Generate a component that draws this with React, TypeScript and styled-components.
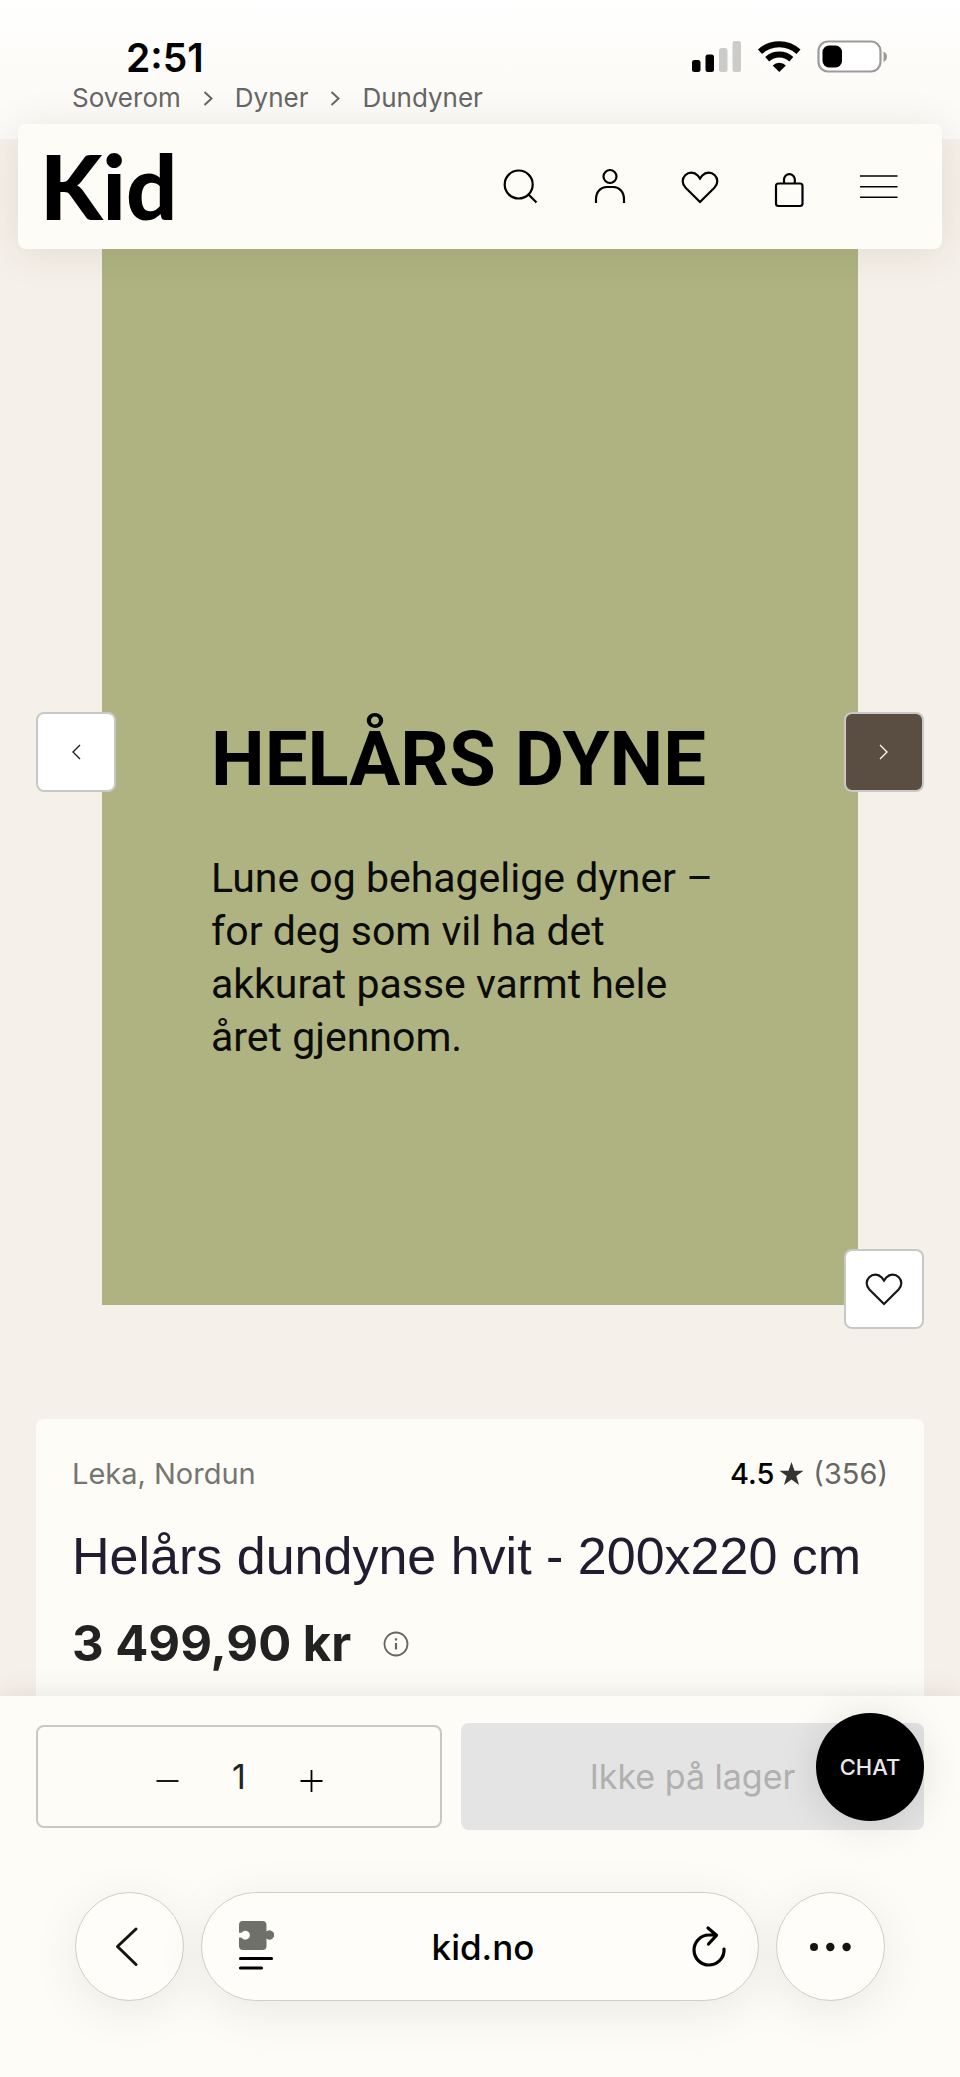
import React, { useState } from "react";
import styled, { createGlobalStyle } from "styled-components";

const GlobalStyle = createGlobalStyle`
  *, *::before, *::after { box-sizing: border-box; }
  body {
    margin: 0;
    background: #fdfcf7;
    font-family: Inter, "Liberation Sans", sans-serif;
    color: #222;
  }
  button, input { font: inherit; color: inherit; }
  h1, h2, p { margin: 0; }
  svg { display: block; }
`;

const Page = styled.div`
  background: linear-gradient(#ffffff 0, #fdfcf9 60px, #fbfaf7 139px, #f5f0e9 139px);
`;

const StatusBar = styled.div`
  display: flex;
  justify-content: space-between;
  align-items: center;
  padding: 36px 72px 0 126px;
`;

const Time = styled.span`
  font-size: 39px;
  font-weight: 600;
  line-height: 44px;
  color: #000;
`;

const Breadcrumbs = styled.nav`
  display: flex;
  align-items: center;
  gap: 21px;
  padding: 2px 72px 10px;
  line-height: 32px;
  color: #666;
`;

const Crumb = styled.a`
  font-size: 26px;
  color: inherit;
  text-decoration: none;
`;

const Header = styled.header`
  position: relative;
  z-index: 2;
  display: flex;
  justify-content: space-between;
  align-items: center;
  height: 125px;
  margin: 0 18px;
  padding: 0 38px 0 22px;
  border-radius: 8px;
  background: #fdfcf7;
  box-shadow: 0 4px 40px rgba(60, 45, 25, 0.1);
`;

const Logo = styled.a`
  padding-bottom: 4px;
  font-family: Lato, sans-serif;
  font-size: 90px;
  font-weight: 900;
  line-height: 112px;
  color: #000;
  text-decoration: none;
`;

const HeaderActions = styled.div`
  display: flex;
  gap: 42px;
`;

const IconButton = styled.button`
  padding: 0;
  border: 0;
  background: none;
  color: #000;
`;

const Gallery = styled.section`
  position: relative;
  padding: 0 102px;
`;

const Slide = styled.div`
  aspect-ratio: 63 / 88;
  padding: 470px 0 0 109px;
  background: #afb381;
  color: #0b0b08;
  font-family: Roboto, sans-serif;
  white-space: nowrap;
`;

const SlideTitle = styled.h2`
  font-size: 76px;
  font-weight: 700;
  line-height: 80px;
  color: #000;
`;

const SlideText = styled.p`
  margin-top: 53px;
  font-size: 41px;
  line-height: 53px;
`;

const SquareButton = styled.button<{ $side: "left" | "right"; $dark?: boolean; $low?: boolean }>`
  position: absolute;
  ${(p) => p.$side}: 36px;
  ${(p) => (p.$low ? "bottom: -24px" : "top: 463px")};
  display: grid;
  place-items: center;
  width: 80px;
  height: 80px;
  padding: 0;
  border: 2px solid #c9c8c5;
  border-radius: 8px;
  background: ${(p) => (p.$dark ? "#5a4e43" : "#fff")};
  color: ${(p) => (p.$dark ? "#fff" : "#16161a")};
`;

const ProductCard = styled.section`
  margin: 114px 36px 0;
  padding: 35px 36px 20px;
  border-radius: 8px 8px 0 0;
  background: #fdfcf7;
`;

const MetaRow = styled.div`
  display: flex;
  justify-content: space-between;
  align-items: center;
  line-height: 40px;
`;

const Brand = styled.a`
  font-size: 29px;
  color: #757571;
  text-decoration: none;
`;

const Rating = styled.div`
  display: flex;
  align-items: center;
  gap: 5px;
  font-size: 29px;
  font-weight: 500;
  color: #000;
`;

const ReviewCount = styled.a`
  padding-left: 4px;
  font-weight: 400;
  color: #666;
  text-decoration: none;
`;

const ProductTitle = styled.h1`
  margin-top: 30px;
  font-family: "Liberation Sans", Arial, sans-serif;
  font-size: 52px;
  font-weight: 400;
  line-height: 64px;
  color: #211d30;
`;

const PriceRow = styled.div`
  display: flex;
  align-items: center;
  gap: 32px;
  margin-top: 24px;
`;

const Price = styled.span`
  font-size: 49px;
  font-weight: 700;
  line-height: 64px;
`;

const BottomBar = styled.div`
  position: relative;
  background: #fdfcf7;
  box-shadow: 0 -4px 24px rgba(60, 50, 40, 0.1);
`;

const BuyRow = styled.div`
  display: grid;
  grid-template-columns: 406fr 463fr;
  gap: 19px;
  align-items: center;
  padding: 27px 36px 62px;
`;

const Quantity = styled.div`
  display: flex;
  justify-content: center;
  align-items: center;
  height: 103px;
  border: 2px solid #c9c8c5;
  border-radius: 8px;
`;

const QuantityInput = styled.input`
  width: 80px;
  padding: 0;
  border: 0;
  background: none;
  font-size: 34px;
  line-height: 40px;
  text-align: center;
`;

const BuyButton = styled.button`
  height: 107px;
  padding: 0;
  border: 0;
  border-radius: 8px;
  background: #e4e4e4;
  color: #b0b0b0;
  font-size: 34px;
`;

const ChatButton = styled.button`
  position: absolute;
  top: 17px;
  right: 36px;
  width: 108px;
  height: 108px;
  padding: 0;
  border: 0;
  border-radius: 50%;
  background: #000;
  color: #e8e8e8;
  font-size: 22px;
  font-weight: 500;
  box-shadow: 0 4px 40px rgba(0, 0, 0, 0.12);
`;

const BrowserBar = styled.div`
  display: flex;
  gap: 17px;
  padding: 0 75px 76px;
`;

const RoundButton = styled.button`
  display: grid;
  place-items: center;
  flex: none;
  width: 109px;
  height: 109px;
  padding: 0;
  border: 1px solid #cfcecb;
  border-radius: 50%;
  background: #fefdfa;
  color: #151510;
  box-shadow: 0 10px 50px rgba(0, 0, 0, 0.08);
`;

const AddressBar = styled.div`
  display: flex;
  flex: 1;
  justify-content: space-between;
  align-items: center;
  height: 109px;
  padding: 0 30px 0 36px;
  border: 1px solid #cfcecb;
  border-radius: 55px;
  background: #fefdfa;
  color: #000;
  box-shadow: 0 10px 50px rgba(0, 0, 0, 0.08);
`;

const Address = styled.span`
  flex: 1;
  text-align: center;
  font-size: 35px;
  font-weight: 500;
  line-height: 48px;
`;

const stroke = (width: number) => ({
  fill: "none",
  stroke: "currentColor",
  strokeWidth: width,
});

const CrumbArrow = () => (
  <svg width="12" height="18" viewBox="0 0 12 18" {...stroke(2)} aria-hidden>
    <path d="M2.500 3l7 6.500-7 6.500" />
  </svg>
);

const HeartIcon = () => (
  <svg width="48" height="48" viewBox="0 0 48 48" {...stroke(2.2)} aria-hidden>
    <path d="M24 39L9.6 24.8C5.8 21 5.8 15.500 9.2 12.200C12.8 8.700 18.2 8.800 21.7 12.400L24 15.600L26.3 12.400C29.8 8.800 35.2 8.700 38.8 12.200C42.2 15.500 42.2 21 38.4 24.800Z" />
  </svg>
);

const StatusIcons = () => (
  <svg width="197" height="36" viewBox="0 0 197 36" role="img" aria-label="Signal, Wi-Fi, batteri">
    <rect x="1" y="20" width="8.500" height="12" rx="2.500" />
    <rect x="14.500" y="14.500" width="8.500" height="17.500" rx="2.500" />
    <rect x="28" y="8" width="8.500" height="24" rx="2.500" fill="#cbcbc9" />
    <rect x="41.500" y="1" width="8.500" height="31" rx="2.500" fill="#cbcbc9" />
    <g fill="none" stroke="#000" strokeWidth="6">
      <path d="M69 11.700A28.500 28.500 0 0 1 107.500 11.700" />
      <path d="M76.200 19.200A18 18 0 0 1 100.300 19.200" />
    </g>
    <path d="M88.300 32L81.700 25.400A9.300 9.300 0 0 1 94.900 25.400Z" />
    <rect x="127.500" y="1.500" width="62" height="30" rx="9.500" fill="#fff" stroke="#9b9b99" strokeWidth="2.200" />
    <rect x="131.500" y="5.500" width="19.500" height="22" rx="6.500" />
    <path d="M192.500 11.500C197.200 13.500 197.200 20 192.500 22Z" fill="#9b9b99" />
  </svg>
);

export default function App() {
  const [quantity, setQuantity] = useState("1");
  const step = (by: number) => setQuantity(String(Math.max(1, Number(quantity) + by)));

  return (
    <Page>
      <GlobalStyle />
      <StatusBar>
        <Time>2:51</Time>
        <StatusIcons />
      </StatusBar>
      <Breadcrumbs aria-label="Brødsmuler">
        <Crumb href="#soverom">Soverom</Crumb>
        <CrumbArrow />
        <Crumb href="#dyner">Dyner</Crumb>
        <CrumbArrow />
        <Crumb href="#dundyner">Dundyner</Crumb>
      </Breadcrumbs>

      <Header>
        <Logo href="#hjem">Kid</Logo>
        <HeaderActions>
          <IconButton aria-label="Søk">
            <svg width="48" height="48" viewBox="0 0 48 48" {...stroke(2.2)}>
              <circle cx="22.700" cy="21.500" r="14" />
              <path d="M32.500 31.500l8 8" />
            </svg>
          </IconButton>
          <IconButton aria-label="Min side">
            <svg width="48" height="48" viewBox="0 0 48 48" {...stroke(2.2)}>
              <circle cx="24" cy="13.500" r="6.500" />
              <path d="M10 40V36.500C10 28.500 15 24 20.500 24H27.500C33 24 38 28.500 38 36.500V40" />
            </svg>
          </IconButton>
          <IconButton aria-label="Favoritter">
            <HeartIcon />
          </IconButton>
          <IconButton aria-label="Handlekurv">
            <svg width="48" height="48" viewBox="0 0 48 48" {...stroke(2.2)}>
              <rect x="10" y="20.500" width="26.500" height="22.500" rx="2.500" />
              <path d="M18 20.500V16.500A5.400 5.400 0 0 1 28.800 16.500V20.500" />
            </svg>
          </IconButton>
          <IconButton aria-label="Meny">
            <svg width="48" height="48" viewBox="0 0 48 48" {...stroke(1.6)}>
              <path d="M4 13H41.500M4 23.700H41.500M4 34.300H41.500" />
            </svg>
          </IconButton>
        </HeaderActions>
      </Header>

      <Gallery>
        <Slide>
          <SlideTitle>HELÅRS DYNE</SlideTitle>
          <SlideText>
            Lune og behagelige dyner –<br />
            for deg som vil ha det<br />
            akkurat passe varmt hele<br />
            året gjennom.
          </SlideText>
        </Slide>
        <SquareButton $side="left" aria-label="Forrige bilde">
          <svg width="10" height="16" viewBox="0 0 10 16" {...stroke(1.3)}>
            <path d="M9 1L2 8l7 7" />
          </svg>
        </SquareButton>
        <SquareButton $side="right" $dark aria-label="Neste bilde">
          <svg width="10" height="16" viewBox="0 0 10 16" {...stroke(1.3)}>
            <path d="M1 1l7 7-7 7" />
          </svg>
        </SquareButton>
        <SquareButton $side="right" $low aria-label="Legg til i favoritter">
          <HeartIcon />
        </SquareButton>
      </Gallery>

      <ProductCard>
        <MetaRow>
          <Brand href="#leka">Leka, Nordun</Brand>
          <Rating>
            <span>4.5</span>
            <svg width="25" height="24" viewBox="0 0 25 24" fill="#333" aria-hidden>
              <path d="M12.500 0L15.500 8.700H24.500L17.300 14L20 23L12.500 17.600L5 23L7.700 14L0.500 8.700H9.500Z" />
            </svg>
            <ReviewCount href="#omtaler">(356)</ReviewCount>
          </Rating>
        </MetaRow>
        <ProductTitle>Helårs dundyne hvit - 200x220 cm</ProductTitle>
        <PriceRow>
          <Price>3 499,90 kr</Price>
          <IconButton aria-label="Prisinformasjon">
            <svg width="26" height="26" viewBox="0 0 26 26" {...stroke(1.8)} color="#666">
              <circle cx="13" cy="13" r="11.500" />
              <path d="M13 12v6.500M13 7.200v2.300" strokeWidth="2.200" />
            </svg>
          </IconButton>
        </PriceRow>
      </ProductCard>

      <BottomBar>
        <BuyRow>
          <Quantity>
            <IconButton aria-label="Færre" onClick={() => step(-1)}>
              <svg width="64" height="40" viewBox="0 0 64 40" {...stroke(1.8)}>
                <path d="M21.500 24H43.500" />
              </svg>
            </IconButton>
            <QuantityInput
              aria-label="Antall"
              inputMode="numeric"
              value={quantity}
              onChange={(e) => setQuantity(e.target.value)}
            />
            <IconButton aria-label="Flere" onClick={() => step(1)}>
              <svg width="64" height="40" viewBox="0 0 64 40" {...stroke(1.8)}>
                <path d="M21.500 24H43.500M32.500 13V35" />
              </svg>
            </IconButton>
          </Quantity>
          <BuyButton disabled>Ikke på lager</BuyButton>
        </BuyRow>
        <ChatButton>CHAT</ChatButton>

        <BrowserBar>
          <RoundButton aria-label="Tilbake">
            <svg width="32" height="42" viewBox="0 0 32 42" {...stroke(3)} strokeLinecap="round" strokeLinejoin="round">
              <path d="M22 3L3.500 20.500L22 38.500" />
            </svg>
          </RoundButton>
          <AddressBar>
            <IconButton aria-label="Sidemeny">
              <svg width="36" height="52" viewBox="0 0 36 52">
                <path
                  fill="#70706b"
                  d="M4.500 -2H24.500Q28.500 -2 28.500 2V8.500A4.600 4.600 0 1 1 28.500 15.500V23Q28.500 27 24.500 27H5Q1 27 1 23V14.500H3.500A4.500 4.500 0 1 0 3.500 9.800H1V2Q1 -2 4.500 -2Z"
                  transform="translate(0 2)"
                />
                <path d="M2.500 37.500H33.500M2.500 47H23.500" {...stroke(3.2)} strokeLinecap="round" />
              </svg>
            </IconButton>
            <Address>kid.no</Address>
            <IconButton aria-label="Last inn på nytt">
              <svg width="36" height="44" viewBox="0 0 36 44" {...stroke(3.2)} strokeLinecap="round" strokeLinejoin="round">
                <path d="M32 24A15 15 0 1 1 17 10H24M16 3L24.500 10.300L16.500 19" />
              </svg>
            </IconButton>
          </AddressBar>
          <RoundButton aria-label="Mer">
            <svg width="42" height="10" viewBox="0 0 42 10" fill="currentColor">
              <circle cx="4" cy="5" r="4" />
              <circle cx="20.300" cy="5" r="4.200" />
              <circle cx="36.600" cy="5" r="4.200" />
            </svg>
          </RoundButton>
        </BrowserBar>
      </BottomBar>
    </Page>
  );
}
